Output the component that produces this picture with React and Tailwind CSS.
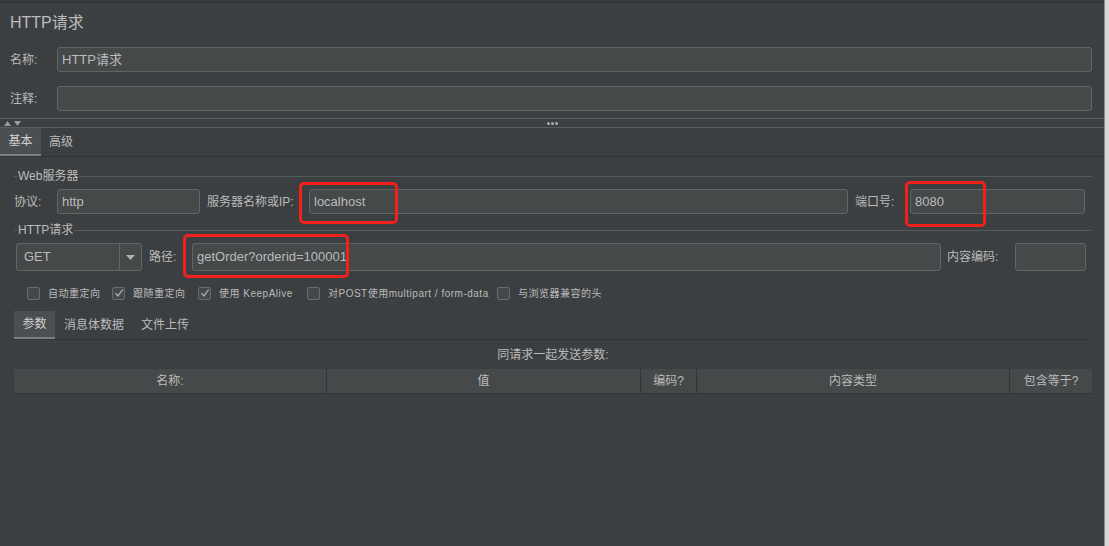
import React from 'react';

const font = "font-['Liberation_Sans','Noto_Sans_CJK_SC',sans-serif]";

function Field({ className = '', value = '' }) {
  return (
    <div
      className={`h-[25px] flex items-center px-[4px] bg-[#45494a] border border-[#646464] rounded-[3px] text-[13px] text-[#bbbbbb] ${className}`}
    >
      {value}
    </div>
  );
}

function Check({ checked, label, className = '' }) {
  return (
    <div className={`flex items-center gap-[8px] ${className}`}>
      <div className="w-[13px] h-[13px] border border-[#6b6b6b] bg-[#43494a] rounded-[2px] flex items-center justify-center">
        {checked && (
          <svg width="10" height="10" viewBox="0 0 10 10">
            <path d="M1.5 5.2 L4 7.8 L8.6 1.6" fill="none" stroke="#a9a9a9" strokeWidth="1.4" />
          </svg>
        )}
      </div>
      <span className="text-[10px] text-[#bbbbbb] tracking-[0.5px]">{label}</span>
    </div>
  );
}

function Legend({ title }) {
  return (
    <div className="flex items-center h-[14px]">
      <div className="w-[3px] h-px bg-[#555a5c]" />
      <span className="px-[1px] text-[12px] text-[#bbbbbb] leading-none">{title}</span>
      <div className="flex-1 h-px bg-[#555a5c]" />
    </div>
  );
}

export default function App() {
  const cols = [
    { label: '名称:', w: 'w-[313px]' },
    { label: '值', w: 'w-[314px]' },
    { label: '编码?', w: 'w-[56px]' },
    { label: '内容类型', w: 'w-[313px]' },
    { label: '包含等于?', w: 'flex-1' },
  ];

  return (
    <div className={`relative w-[1109px] h-[546px] overflow-hidden flex bg-[#3c3f41] ${font}`}>
      <div className="w-[1104px] flex flex-col">
        <div className="h-[3px] bg-[#383b3d] border-b border-[#323436]" />

        <div className="h-[39px] flex items-center pl-[10px] text-[16px] text-[#bbbbbb]">HTTP请求</div>

        <div className="flex flex-col gap-[14px] pr-[12px] pt-[5px]">
          <div className="flex items-center">
            <span className="w-[57px] pl-[10px] text-[12px] text-[#bbbbbb]">名称:</span>
            <Field className="flex-1" value="HTTP请求" />
          </div>
          <div className="flex items-center">
            <span className="w-[57px] pl-[10px] text-[12px] text-[#bbbbbb]">注释:</span>
            <Field className="flex-1" />
          </div>
        </div>

        <div className="mt-[7px] h-[10px] border-t border-b border-[#5a5d5f] relative flex items-center justify-center">
          <div className="absolute left-[4px] top-[2px] flex gap-[3px]">
            <svg width="7" height="5" viewBox="0 0 7 5"><path d="M0 5 L3.5 0 L7 5Z" fill="#9a9a9a" /></svg>
            <svg width="7" height="5" viewBox="0 0 7 5"><path d="M0 0 L3.5 5 L7 0Z" fill="#9a9a9a" /></svg>
          </div>
          <div className="flex gap-[1px]">
            <div className="w-[3px] h-[3px] rounded-full bg-[#aaaaaa]" />
            <div className="w-[3px] h-[3px] rounded-full bg-[#aaaaaa]" />
            <div className="w-[3px] h-[3px] rounded-full bg-[#aaaaaa]" />
          </div>
        </div>

        <div className="h-[29px] flex border-b border-[#323537]">
          <div className="w-[41px] flex items-center justify-center bg-[#4b4f51] border-b-[2px] border-[#7a7d80] text-[12px] text-[#d0d0d0]">基本</div>
          <div className="px-[8px] flex items-center text-[12px] text-[#bbbbbb]">高级</div>
        </div>

        <div className="pl-[14px] pr-[12px] pt-[12px]">
          <Legend title="Web服务器" />
          <div className="flex items-center mt-[6px] pr-[7px]">
            <span className="w-[43px] text-[12px] text-[#bbbbbb]">协议:</span>
            <Field className="w-[143px]" value="http" />
            <span className="w-[109px] pl-[7px] text-[12px] text-[#bbbbbb]">服务器名称或IP:</span>
            <Field className="w-[539px]" value="localhost" />
            <span className="w-[62px] pl-[7px] text-[12px] text-[#bbbbbb]">端口号:</span>
            <Field className="flex-1" value="8080" />
          </div>

          <div className="mt-[9px]">
            <Legend title="HTTP请求" />
          </div>
          <div className="flex items-center mt-[6px] pl-[2px] pr-[6px]">
            <div className="w-[126px] h-[28px] flex bg-[#45494a] border border-[#646464] rounded-[3px]">
              <div className="flex-1 flex items-center pl-[7px] text-[13px] text-[#bbbbbb]">GET</div>
              <div className="w-[22px] border-l border-[#646464] flex items-center justify-center">
                <svg width="9" height="5" viewBox="0 0 9 5"><path d="M0 0 L4.5 5 L9 0Z" fill="#b0b0b0" /></svg>
              </div>
            </div>
            <span className="w-[50px] pl-[7px] text-[12px] text-[#bbbbbb]">路径:</span>
            <Field className="w-[749px] !h-[28px]" value="getOrder?orderid=100001" />
            <span className="w-[74px] pl-[6px] text-[12px] text-[#bbbbbb]">内容编码:</span>
            <Field className="flex-1 !h-[28px]" />
          </div>

          <div className="flex items-center h-[14px] mt-[15px] pl-[13px]">
            <Check label="自动重定向" className="w-[85px]" />
            <Check checked label="跟随重定向" className="w-[86px]" />
            <Check checked label="使用 KeepAlive" className="w-[109px]" />
            <Check label="对POST使用multipart / form-data" className="w-[190px]" />
            <Check label="与浏览器兼容的头" />
          </div>

          <div className="mt-[11px] h-[29px] flex border-b border-[#323537]">
            <div className="w-[41px] flex items-center justify-center bg-[#4b4f51] border-b-[2px] border-[#7a7d80] text-[12px] text-[#d0d0d0]">参数</div>
            <div className="pl-[9px] pr-[8px] flex items-center text-[12px] text-[#bbbbbb]">消息体数据</div>
            <div className="px-[9px] flex items-center text-[12px] text-[#bbbbbb]">文件上传</div>
          </div>

          <div className="h-[29px] flex items-center justify-center text-[12px] text-[#bbbbbb]">同请求一起发送参数:</div>

          <div className="h-[25px] flex bg-[#45494a] border-b border-[#323537]">
            {cols.map((c, i) => (
              <div
                key={c.label}
                className={`${c.w} flex items-center justify-center text-[12px] text-[#bbbbbb] ${i < cols.length - 1 ? 'border-r border-[#323537]' : ''}`}
              >
                {c.label}
              </div>
            ))}
          </div>
        </div>
      </div>
      <div className="w-px bg-[#8c8c8c]" />
      <div className="flex-1 bg-[#d6d6d6]" />

      <div className="absolute left-[299px] top-[182px] w-[99px] h-[42px] border-[3px] border-[#f2201a] rounded-[5px]" />
      <div className="absolute left-[905px] top-[181px] w-[81px] h-[46px] border-[3px] border-[#f2201a] rounded-[5px]" />
      <div className="absolute left-[183px] top-[234px] w-[166px] h-[44px] border-[3px] border-[#f2201a] rounded-[5px]" />
    </div>
  );
}
